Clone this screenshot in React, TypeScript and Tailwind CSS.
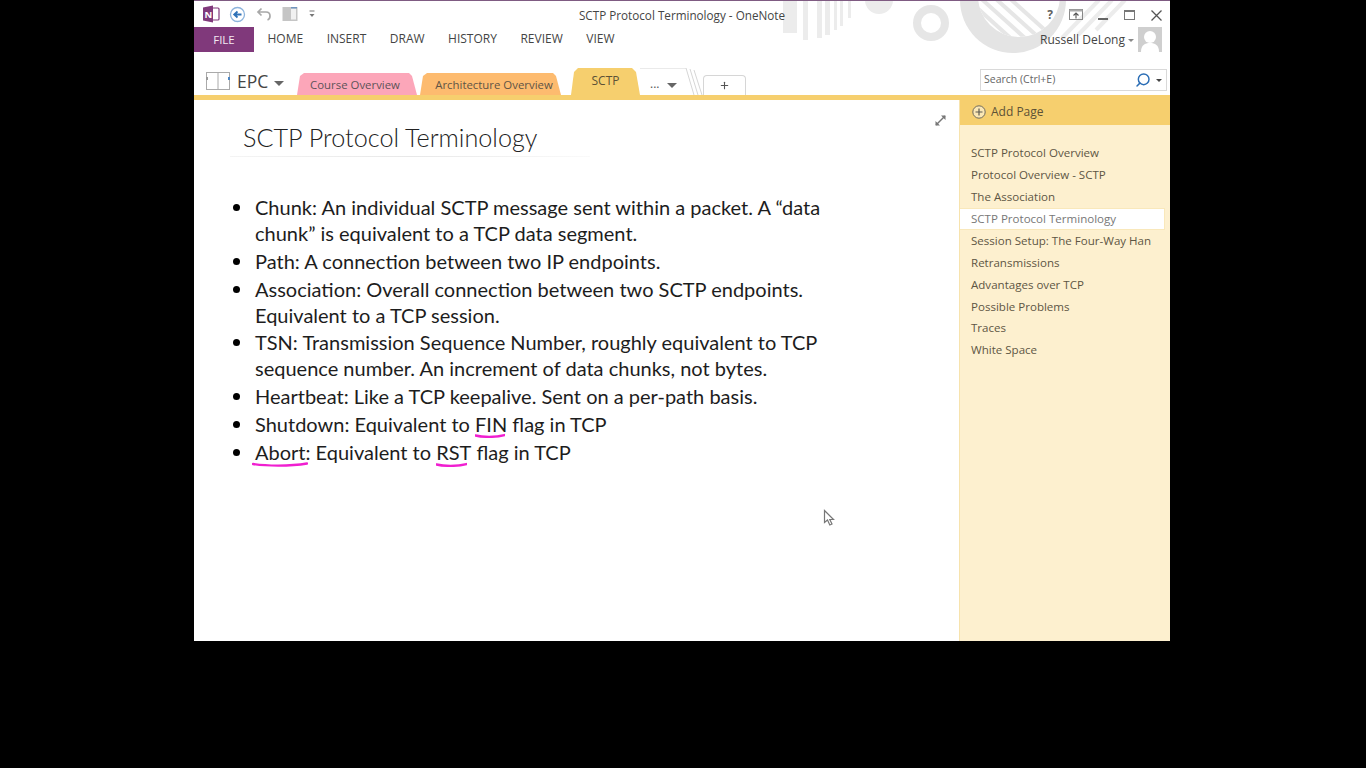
import { Plus, Search } from 'lucide-react';

const ribbonTabs = ['HOME', 'INSERT', 'DRAW', 'HISTORY', 'REVIEW', 'VIEW'];

const pages = [
  'SCTP Protocol Overview',
  'Protocol Overview - SCTP',
  'The Association',
  'SCTP Protocol Terminology',
  'Session Setup: The Four-Way Han',
  'Retransmissions',
  'Advantages over TCP',
  'Possible Problems',
  'Traces',
  'White Space',
];

function InkLine({ className }: { className: string }) {
  return (
    <svg className={`absolute ${className}`} viewBox="0 0 60 6" preserveAspectRatio="none" fill="none">
      <path d="M1 3 C 15 5, 40 5.5, 59 2.5" stroke="#f01fd0" strokeWidth="2.4" strokeLinecap="round" vectorEffect="non-scaling-stroke" />
    </svg>
  );
}

function Backdrop() {
  return (
    <svg className="absolute left-0 top-0" width="976" height="64" viewBox="0 0 976 64" fill="none">
      <defs>
        <clipPath id="inner">
          <circle cx="825" cy="-4" r="41" />
        </clipPath>
      </defs>
      <g fill="#ececec">
        <rect x="589" y="0" width="14" height="33" />
        <rect x="609" y="0" width="5" height="40" />
        <rect x="623" y="0" width="5" height="38" />
        <rect x="631" y="0" width="5" height="35" />
        <rect x="640" y="0" width="3" height="30" />
        <rect x="646" y="0" width="3" height="26" />
        <rect x="654" y="0" width="3" height="18" />
        <circle cx="685" cy="0" r="14" />
      </g>
      <circle cx="737" cy="23" r="14" stroke="#e6e6e6" strokeWidth="8" />
      <circle cx="819" cy="0" r="53" fill="#e4e4e4" />
      <circle cx="825" cy="-4" r="41" fill="#ffffff" />
      <g clipPath="url(#inner)" stroke="#e6e6e6" strokeWidth="4">
        <path d="M772 -2 L 832 52" />
        <path d="M782 -6 L 842 48" />
        <path d="M792 -10 L 852 44" />
        <path d="M802 -14 L 862 40" />
      </g>
      <g stroke="#ececec" strokeWidth="4">
        <path d="M905 0 L 868 38" />
        <path d="M918 0 L 884 35" />
        <path d="M931 0 L 902 30" />
      </g>
    </svg>
  );
}

function Toolbar() {
  return (
    <div className="flex h-[26px] items-center pl-[8px]">
      <svg width="18" height="18" viewBox="0 0 18 18">
        <rect x="10" y="3" width="7" height="12" rx="1" fill="#fff" stroke="#80397b" strokeWidth="1.2" />
        <path d="M1 2.5 L11 0.5 V17.5 L1 15.5 Z" fill="#80397b" />
        <text x="2.6" y="12.5" fontSize="9.5" fontWeight="700" fill="#fff" fontFamily="'Open Sans', sans-serif">N</text>
      </svg>
      <svg className="ml-[9px]" width="17" height="17" viewBox="0 0 17 17" fill="none">
        <circle cx="8.5" cy="8.5" r="7" stroke="#8db4dc" strokeWidth="1.3" />
        <path d="M12.5 8.5 H6 M8.5 5.5 L5.2 8.5 L8.5 11.5" stroke="#2f72b8" strokeWidth="1.8" />
      </svg>
      <svg className="ml-[10px]" width="16" height="16" viewBox="0 0 16 16" fill="none">
        <path d="M5.5 2.5 L2 6 L5.5 9.5 M2.5 6 H10 C 13 6, 14 8, 14 10 C 14 12, 13 13.5, 11.5 14" stroke="#a8a8a8" strokeWidth="1.7" />
      </svg>
      <svg className="ml-[10px]" width="16" height="16" viewBox="0 0 16 16">
        <rect x="0.5" y="1" width="15" height="14" fill="#c5c5c5" />
        <rect x="9" y="2.5" width="5" height="11" fill="#f1f1f1" />
        <rect x="9" y="1" width="6" height="1.5" fill="#6f94bd" />
      </svg>
      <svg className="ml-[11px]" width="6" height="8" viewBox="0 0 6 8">
        <rect x="0.5" y="0.5" width="5" height="1" fill="#777" />
        <path d="M0.5 4 H5.5 L3 7 Z" fill="#777" />
      </svg>
    </div>
  );
}

function WindowButtons() {
  return (
    <div className="absolute right-[8px] top-[7px] flex items-center text-[#5f5f5f]">
      <span className="mr-[16px] text-[12px] font-bold leading-[14px]">?</span>
      <svg className="mr-[15px]" width="14" height="12" viewBox="0 0 14 12" fill="none">
        <rect x="0.5" y="0.5" width="13" height="10" stroke="#888" />
        <rect x="0.5" y="0.5" width="13" height="2" fill="#aaa" />
        <path d="M7 9.5 V4.5 M4.5 6.5 L7 4 L9.5 6.5" stroke="#555" strokeWidth="1.1" />
      </svg>
      <span className="mr-[16px] mt-[8px] h-[1.5px] w-[10px] bg-[#666]" />
      <span className="mr-[16px] h-[10px] w-[11px] border border-t-2 border-[#777]" />
      <svg width="11" height="11" viewBox="0 0 11 11" fill="none">
        <path d="M0.5 0.5 L10.5 10.5 M10.5 0.5 L0.5 10.5" stroke="#555" strokeWidth="1.3" />
      </svg>
    </div>
  );
}

function RibbonRow() {
  return (
    <div className="flex h-[25px] items-stretch">
      <div className="flex w-[60px] items-center justify-center bg-[#80397b] text-[11.5px] text-[#f3e8f2]">FILE</div>
      <div className="flex items-center gap-[23.5px] pb-[1px] pl-[13.5px] text-[12px] text-[#444]">
        {ribbonTabs.map((tab) => (
          <span key={tab}>{tab}</span>
        ))}
      </div>
      <div className="ml-auto flex items-center pr-[8px]">
        <span className="text-[12px] text-[#444]">Russell DeLong</span>
        <span className="ml-[3px] mr-[4px] mt-[1px] h-0 w-0 border-x-[3px] border-t-[3px] border-x-transparent border-t-[#888]" />
        <svg width="24" height="25" viewBox="0 0 24 25">
          <rect width="24" height="25" fill="#cfcfcf" />
          <circle cx="12" cy="10" r="6" fill="#fff" />
          <path d="M3 25 C 3 18, 7 16, 12 16 C 17 16, 21 18, 21 25 Z" fill="#fff" />
        </svg>
      </div>
    </div>
  );
}

function SectionRow() {
  return (
    <div className="relative flex h-[43px] items-end">
      <div className="flex h-full w-[102px] items-center self-start pl-[12px] pt-[15px]">
        <svg width="24" height="20" viewBox="0 0 24 20" fill="none">
          <rect x="0.5" y="1.5" width="23" height="17" fill="#fff" stroke="#aaa" />
          <path d="M12 1.5 V18.5" stroke="#aaa" />
          <rect x="0" y="6" width="2" height="3" fill="#999" />
          <rect x="22" y="6" width="2" height="3" fill="#4d86c4" />
        </svg>
        <span className="ml-[7px] text-[17.5px] text-[#444]">EPC</span>
        <span className="ml-[6px] mt-[4px] h-0 w-0 border-x-[5px] border-t-[5px] border-x-transparent border-t-[#666]" />
      </div>
      <div className="ml-[1px] flex h-[22px] w-[120px] items-center justify-center bg-[#fca6b9] pr-[4px] pt-[2px] text-[11.4px] text-[#5d5358] [clip-path:polygon(0_100%,3px_3px,7px_0,calc(100%-8px)_0,calc(100%-5px)_3px,100%_100%)]">
        Course Overview
      </div>
      <div className="ml-[3px] flex h-[22px] w-[141px] items-center justify-center bg-[#fdbb6f] pl-[7px] pt-[2px] text-[11.4px] text-[#5f5445] [clip-path:polygon(0_100%,3px_3px,7px_0,calc(100%-8px)_0,calc(100%-5px)_3px,100%_100%)]">
        Architecture Overview
      </div>
      <div className="ml-[10px] flex h-[27px] w-[69px] items-center justify-center bg-[#f6cf6e] pb-[2px] text-[12px] text-[#5c5136] [clip-path:polygon(0_100%,3px_4px,7px_0,calc(100%-8px)_0,calc(100%-4px)_4px,100%_100%)]">
        SCTP
      </div>
      <svg className="h-[27px] w-[63px]" viewBox="0 0 63 27" fill="none">
        <path d="M0 0 H46 L54 27 M50 1 L58 27 M54 2 L62 27" stroke="#d6d6d6" />
      </svg>
      <div className="absolute bottom-[2px] left-[456px] flex items-center text-[12px] text-[#555]">
        <span>...</span>
        <span className="ml-[8px] mt-[2px] h-0 w-0 border-x-[5px] border-t-[5px] border-x-transparent border-t-[#666]" />
      </div>
      <div className="flex h-[20px] w-[43px] items-center justify-center rounded-t-[4px] border border-b-0 border-[#d6d6d6] text-[#555]">
        <Plus size={11} strokeWidth={2.4} />
      </div>
      <div className="mb-[4px] ml-auto mr-[3px] flex h-[22px] w-[187px] items-center border border-[#d9d9d9] bg-white pl-[3px] pr-[4px] text-[10.5px] text-[#666]">
        <span>Search (Ctrl+E)</span>
        <Search size={16} strokeWidth={2.2} className="ml-auto -scale-x-100 text-[#2a6db5]" />
        <span className="ml-[5px] h-0 w-0 border-x-[3px] border-t-[3px] border-x-transparent border-t-[#444]" />
      </div>
    </div>
  );
}

function Note() {
  const items = [
    <>Chunk: An individual SCTP message sent within a packet. A “data<br />chunk” is equivalent to a TCP data segment.</>,
    <>Path: A connection between two IP endpoints.</>,
    <>Association: Overall connection between two SCTP endpoints.<br />Equivalent to a TCP session.</>,
    <>TSN: Transmission Sequence Number, roughly equivalent to TCP<br />sequence number. An increment of data chunks, not bytes.</>,
    <>Heartbeat: Like a TCP keepalive. Sent on a per-path basis.</>,
    <>
      Shutdown: Equivalent to{' '}
      <span className="relative">
        FIN
        <InkLine className="-bottom-[2px] left-0 h-[5px] w-[30px]" />
      </span>{' '}
      flag in TCP
    </>,
    <>
      <span className="relative">
        Abort
        <InkLine className="-bottom-[3px] -left-[3px] h-[6px] w-[56px]" />
      </span>
      : Equivalent to{' '}
      <span className="relative">
        RST
        <InkLine className="-bottom-[3px] left-0 h-[5px] w-[31px]" />
      </span>{' '}
      flag in TCP
    </>,
  ];

  return (
    <div className="relative min-w-0 flex-1 font-['Lato',sans-serif]">
      <h1 className="ml-[49px] mt-[21px] text-[25.2px] font-light leading-[32px] text-[#222]">SCTP Protocol Terminology</h1>
      <div className="ml-[36px] mt-[3px] h-px w-[360px] bg-gradient-to-r from-[#f4f4f4] via-[#e8e8e8] to-[#fafafa]" />
      <ul className="ml-[39px] mt-[37px] flex flex-col gap-[1.8px] text-[20px] leading-[26px] text-[#1d1d1d]">
        {items.map((item, i) => (
          <li key={i} className="flex">
            <span className="mr-[15px] mt-[10px] h-[7px] w-[7px] shrink-0 rounded-full bg-black" />
            <span>{item}</span>
          </li>
        ))}
      </ul>
      <svg className="absolute right-[12px] top-[14px]" width="13" height="13" viewBox="0 0 13 13" fill="none">
        <path d="M2 11 L11 2" stroke="#777" strokeWidth="1.4" />
        <path d="M7 1.5 H11.5 V6 Z M1.5 7 V11.5 H6 Z" fill="#777" />
      </svg>
      <svg className="absolute left-[629px] top-[409px]" width="12" height="18" viewBox="0 0 12 18" fill="#fff">
        <path d="M1.5 1.5 V13.5 L4.5 11 L6.8 16 L9 15 L6.8 10.5 H10.5 Z" stroke="#777" strokeWidth="1.2" />
      </svg>
    </div>
  );
}

function PagePanel() {
  return (
    <div className="flex w-[211px] flex-col border-l border-[#f7e3ad] bg-[#fdf0cf]">
      <div className="flex h-[25px] items-center bg-[#f6cf6e] pb-[2px] pl-[12px] text-[12px] text-[#5c5136]">
        <svg width="14" height="14" viewBox="0 0 14 14" fill="none">
          <circle cx="7" cy="7" r="6.2" fill="#fbe7b4" stroke="#6e6a5c" />
          <path d="M7 3.5 V10.5 M3.5 7 H10.5" stroke="#5c5a50" strokeWidth="1.2" />
        </svg>
        <span className="ml-[5px]">Add Page</span>
      </div>
      <div className="mt-[17px] flex flex-col pr-[5px]">
        {pages.map((page) => (
          <div
            key={page}
            className={
              page === 'SCTP Protocol Terminology'
                ? 'flex h-[21.9px] items-center whitespace-nowrap border-y border-r border-[#f9e8bb] bg-white pl-[11px] text-[11.55px] text-[#777]'
                : 'flex h-[21.9px] items-center whitespace-nowrap pl-[11px] text-[11.55px] text-[#5d5644]'
            }
          >
            {page}
          </div>
        ))}
      </div>
    </div>
  );
}

export default function App() {
  return (
    <div className="h-[768px] w-[1366px] overflow-hidden bg-black pl-[194px] font-['Open_Sans',sans-serif]">
      <div className="relative flex h-[641px] w-[976px] flex-col bg-white">
        <Backdrop />
        <div className="relative h-px bg-[#7f5b82]" />
        <div className="relative">
          <Toolbar />
          <div className="absolute left-0 top-[7px] w-full text-center text-[11.7px] leading-[14px] text-[#444]">
            SCTP Protocol Terminology - OneNote
          </div>
          <WindowButtons />
        </div>
        <div className="relative">
          <RibbonRow />
          <SectionRow />
        </div>
        <div className="h-[5px] bg-[#f6cf6e]" />
        <div className="flex min-h-0 flex-1">
          <Note />
          <PagePanel />
        </div>
      </div>
    </div>
  );
}
